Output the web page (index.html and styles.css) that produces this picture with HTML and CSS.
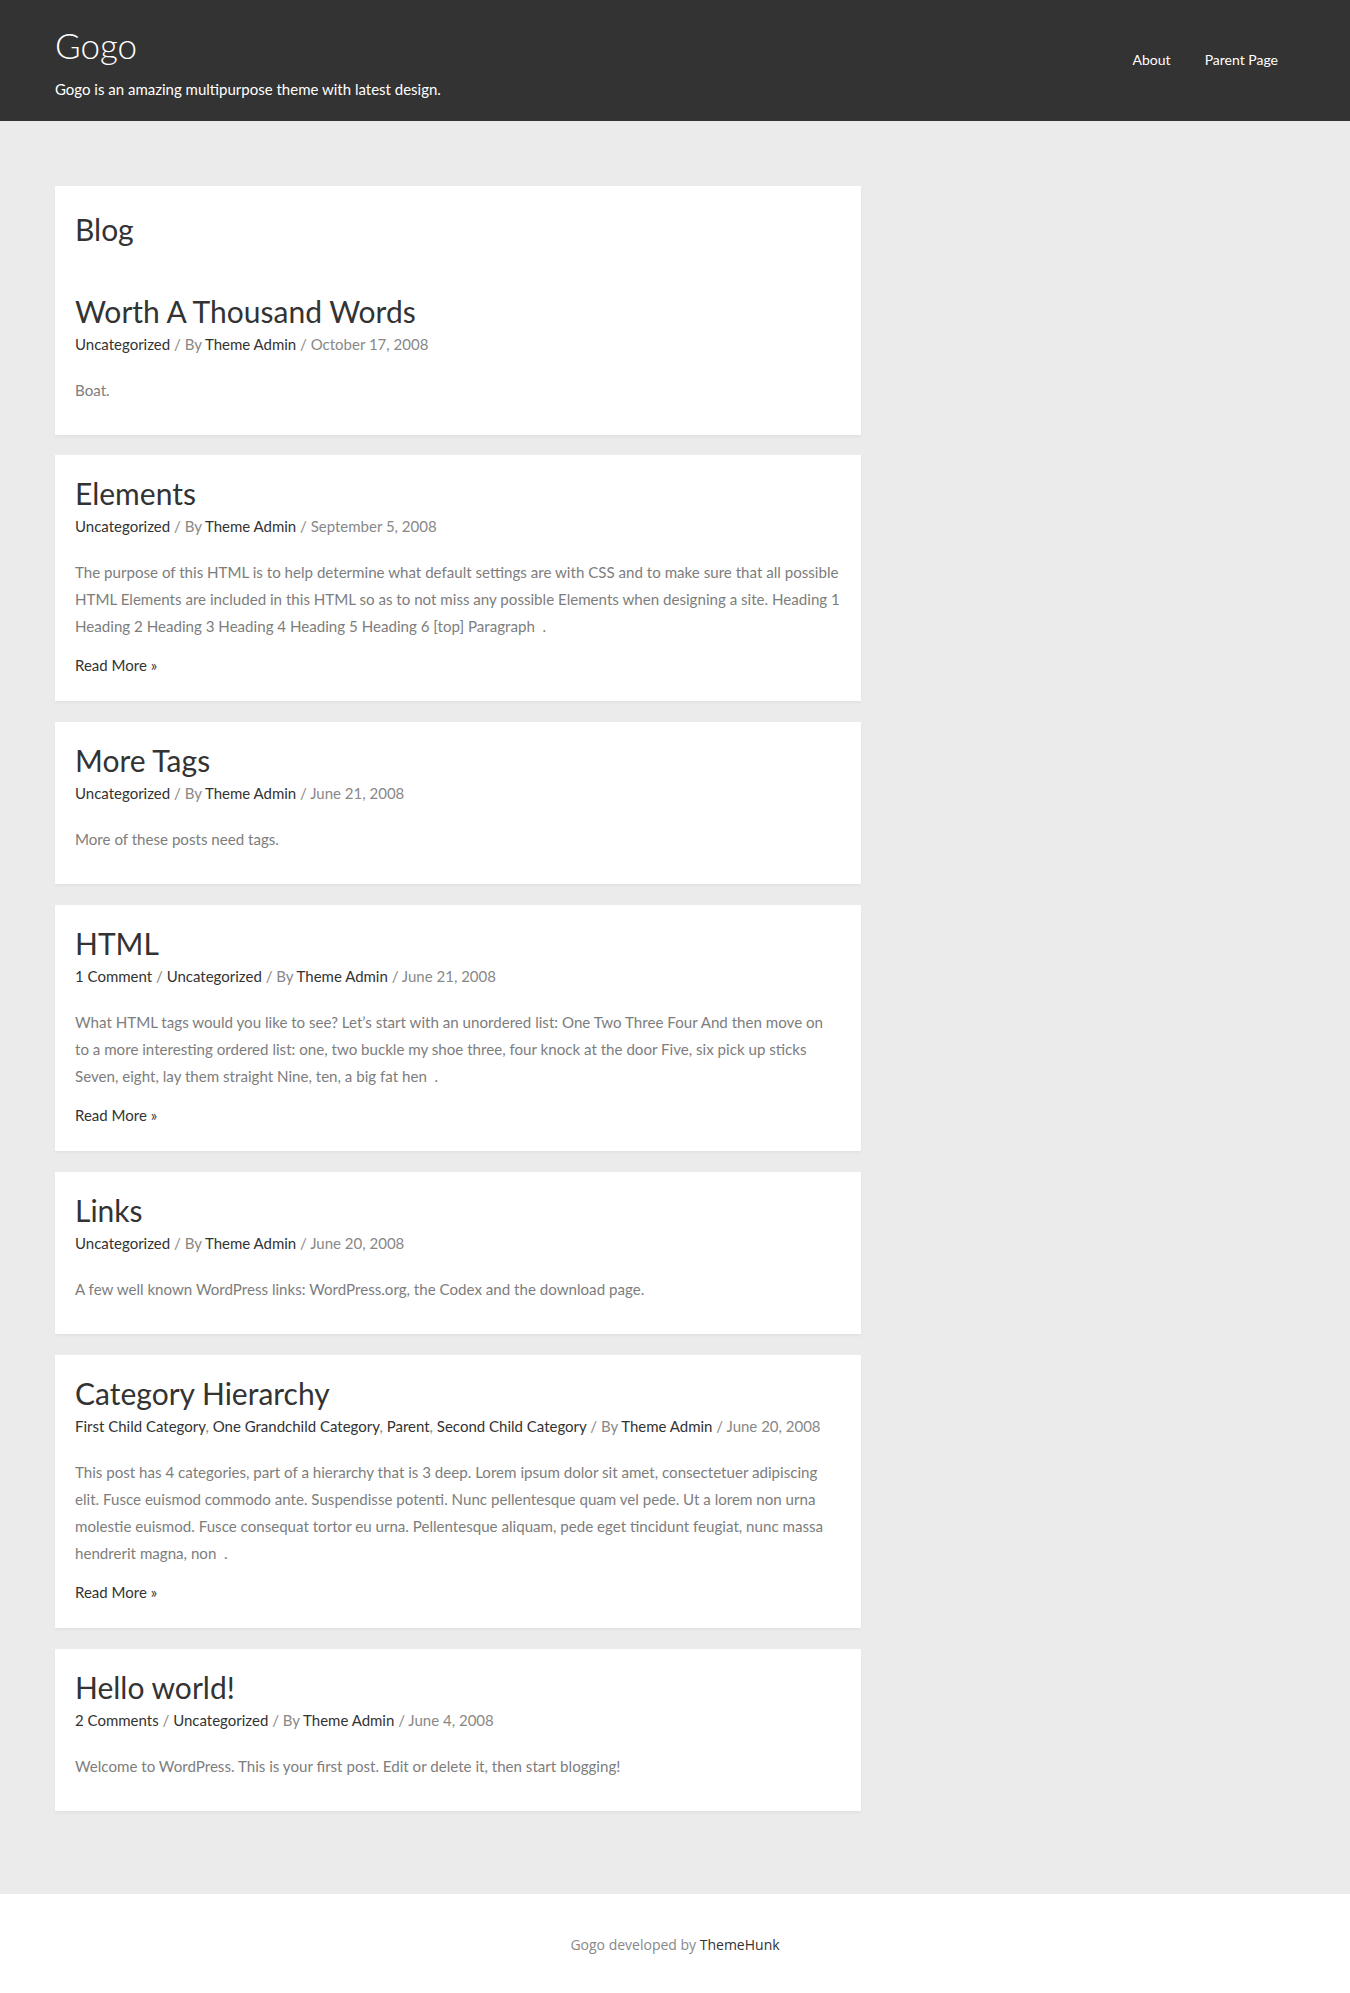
FILE: index.html
```html
<!DOCTYPE html>
<html lang="en">
<head>
    <meta charset="UTF-8">
    <meta name="viewport" content="width=device-width, initial-scale=1.0">
    <title>Blog – Gogo</title>
    <link rel="stylesheet" href="styles.css">
</head>
<body>
    <header class="site-header">
        <div class="container header-inner">
            <div class="branding">
                <a class="site-title" href="#">Gogo</a>
                <p class="site-tagline">Gogo is an amazing multipurpose theme with latest design.</p>
            </div>
            <nav class="main-nav">
                <a href="#">About</a>
                <a href="#">Parent Page</a>
            </nav>
        </div>
    </header>

    <main class="site-content">
        <div class="container">
            <div class="primary">

                <article class="post-card">
                    <h1 class="page-title">Blog</h1>
                    <h2 class="post-title"><a href="#">Worth A Thousand Words</a></h2>
                    <div class="post-meta">
                        <a href="#">Uncategorized</a> / By <a href="#">Theme Admin</a> / October 17, 2008
                    </div>
                    <p class="post-excerpt">Boat.</p>
                </article>

                <article class="post-card">
                    <h2 class="post-title"><a href="#">Elements</a></h2>
                    <div class="post-meta">
                        <a href="#">Uncategorized</a> / By <a href="#">Theme Admin</a> / September 5, 2008
                    </div>
                    <p class="post-excerpt">The purpose of this HTML is to help determine what default settings are with CSS and to make sure that all possible HTML Elements are included in this HTML so as to not miss any possible Elements when designing a site. Heading 1 Heading 2 Heading 3 Heading 4 Heading 5 Heading 6 [top] Paragraph &nbsp;.</p>
                    <p class="read-more"><a href="#">Read More &raquo;</a></p>
                </article>

                <article class="post-card">
                    <h2 class="post-title"><a href="#">More Tags</a></h2>
                    <div class="post-meta">
                        <a href="#">Uncategorized</a> / By <a href="#">Theme Admin</a> / June 21, 2008
                    </div>
                    <p class="post-excerpt">More of these posts need tags.</p>
                </article>

                <article class="post-card">
                    <h2 class="post-title"><a href="#">HTML</a></h2>
                    <div class="post-meta">
                        <a href="#">1 Comment</a> / <a href="#">Uncategorized</a> / By <a href="#">Theme Admin</a> / June 21, 2008
                    </div>
                    <p class="post-excerpt">What HTML tags would you like to see? Let’s start with an unordered list: One Two Three Four And then move on to&nbsp;a more interesting ordered list: one, two buckle my shoe three, four knock at the door Five, six pick up sticks Seven, eight, lay them straight Nine, ten, a big fat hen &nbsp;.</p>
                    <p class="read-more"><a href="#">Read More &raquo;</a></p>
                </article>

                <article class="post-card">
                    <h2 class="post-title"><a href="#">Links</a></h2>
                    <div class="post-meta">
                        <a href="#">Uncategorized</a> / By <a href="#">Theme Admin</a> / June 20, 2008
                    </div>
                    <p class="post-excerpt">A few well known WordPress links: WordPress.org, the Codex and the download page.</p>
                </article>

                <article class="post-card">
                    <h2 class="post-title"><a href="#">Category Hierarchy</a></h2>
                    <div class="post-meta">
                        <a href="#">First Child Category</a>, <a href="#">One Grandchild Category</a>, <a href="#">Parent</a>, <a href="#">Second Child Category</a> / By <a href="#">Theme Admin</a> / June 20, 2008
                    </div>
                    <p class="post-excerpt">This post has 4 categories, part of a hierarchy that is 3 deep. Lorem ipsum dolor sit amet, consectetuer adipiscing elit. Fusce euismod commodo ante. Suspendisse potenti. Nunc pellentesque quam vel pede. Ut a lorem non urna molestie euismod. Fusce consequat tortor eu urna. Pellentesque aliquam, pede eget tincidunt feugiat, nunc massa hendrerit magna, non &nbsp;.</p>
                    <p class="read-more"><a href="#">Read More &raquo;</a></p>
                </article>

                <article class="post-card">
                    <h2 class="post-title"><a href="#">Hello world!</a></h2>
                    <div class="post-meta">
                        <a href="#">2 Comments</a> / <a href="#">Uncategorized</a> / By <a href="#">Theme Admin</a> / June 4, 2008
                    </div>
                    <p class="post-excerpt">Welcome to WordPress. This is your first post. Edit or delete it, then start blogging!</p>
                </article>

            </div>
        </div>
    </main>

    <footer class="site-footer">
        <p>Gogo developed by <a href="#">ThemeHunk</a></p>
    </footer>
</body>
</html>
```

FILE: styles.css
```css
body {
    margin: 0;
    min-height: 100vh;
    display: flex;
    flex-direction: column;
    font-family: 'Lato', 'Noto Sans', sans-serif;
    background: #ebebeb;
    color: #7a7a7a;
}

a {
    color: #333333;
    text-decoration: none;
}

.container {
    max-width: 1240px;
    margin: 0 auto;
}

/* header */
.site-header {
    background: #333333;
    height: 121px;
    flex-shrink: 0;
}

.header-inner {
    display: flex;
    justify-content: space-between;
    align-items: center;
    height: 100%;
}

.branding {
    padding-top: 2px;
}

.site-title {
    display: block;
    color: #ffffff;
    font-size: 35px;
    font-weight: 300;
    line-height: 44px;
}

.site-tagline {
    margin: 10px 0 0;
    color: #ffffff;
    font-size: 15px;
    line-height: 24px;
}

.main-nav {
    display: flex;
    margin-top: -1px;
}

.main-nav a {
    color: #ffffff;
    font-size: 14px;
    padding: 0 17px;
    line-height: 24px;
}

/* content */
.site-content {
    flex: 1;
    padding: 65px 0 83px;
}

.primary {
    width: 806px;
}

.post-card {
    background: #ffffff;
    padding: 20px 20px 21px;
    margin-bottom: 21px;
    box-shadow: 0 2px 3px rgba(0, 0, 0, 0.04);
}

.post-card:first-child {
    margin-bottom: 20px;
}

.post-card:last-child {
    margin-bottom: 0;
}

.page-title {
    margin: 0 0 41px;
    font-size: 30px;
    font-weight: 400;
    line-height: 46px;
    color: #333333;
}

.post-title {
    margin: 0;
    font-size: 30px;
    font-weight: 400;
    line-height: 36px;
}

.post-title a {
    color: #333333;
}

.post-meta {
    font-size: 15px;
    line-height: 30px;
    color: #888888;
}

.post-excerpt {
    margin: 18px 0 10px;
    font-size: 15.12px;
    line-height: 27px;
    color: #7d7d7d;
}

.read-more {
    margin: 0;
    font-size: 15px;
    line-height: 30px;
}

/* footer */
.site-footer {
    background: #ffffff;
    height: 100px;
    flex-shrink: 0;
    display: flex;
    align-items: center;
    justify-content: center;
}

.site-footer p {
    margin: 0;
    font-family: 'Open Sans', 'Noto Sans', sans-serif;
    font-size: 14px;
    color: #888888;
}

.site-footer a {
    color: #333333;
}
```
